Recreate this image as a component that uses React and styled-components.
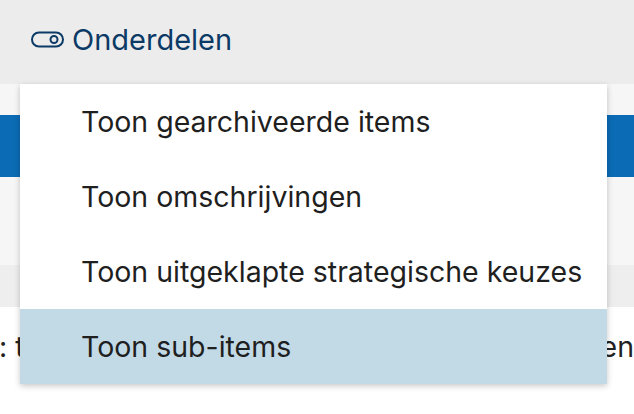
import React from 'react';
import styled, { createGlobalStyle } from 'styled-components';

const GlobalStyle = createGlobalStyle`
  html, body {
    margin: 0;
    padding: 0;
    background: #ffffff;
    font-family: Inter, "Noto Sans", sans-serif;
  }
`;

const Page = styled.div`
  position: relative;
  width: 634px;
  height: 414px;
  overflow: hidden;
`;

const Header = styled.div`
  height: 84px;
  background: #ececec;
  display: flex;
  align-items: center;
  padding: 0 0 5px 31px;
  box-sizing: border-box;
`;

const HeaderButton = styled.div`
  display: flex;
  align-items: center;
  gap: 7px;
  color: #0b3a66;
  font-size: 29px;
  font-weight: 400;
`;

const Band = styled.div`
  height: ${p => p.h}px;
  background: ${p => p.bg};
`;

const TextRow = styled.div`
  height: 107px;
  display: flex;
  align-items: center;
  justify-content: space-between;
  font-size: 28.5px;
  color: #222;
  white-space: nowrap;
  padding-bottom: 28px;
  box-sizing: border-box;
`;

const Clip = styled.span`
  margin-left: -1px;
`;

const Menu = styled.div`
  position: absolute;
  top: 84px;
  left: 20px;
  width: 587px;
  background: #ffffff;
  box-shadow: 0 2px 6px rgba(0, 0, 0, 0.22);
`;

const MenuItem = styled.div`
  height: 75px;
  display: flex;
  align-items: center;
  padding-left: 61px;
  font-size: 28.5px;
  color: #1f1f1f;
  background: ${p => (p.active ? '#c2dae6' : 'transparent')};
`;

const ToggleIcon = () => (
  <svg width="34" height="18" viewBox="0 0 34 18" fill="none">
    <rect x="1" y="1.5" width="31" height="14" rx="7" stroke="#0b3a66" strokeWidth="2" />
    <circle cx="23" cy="8.5" r="3.5" stroke="#0b3a66" strokeWidth="2" />
  </svg>
);

const items = [
  'Toon gearchiveerde items',
  'Toon omschrijvingen',
  'Toon uitgeklapte strategische keuzes',
  'Toon sub-items',
];

export default function App() {
  return (
    <Page>
      <GlobalStyle />
      <Header>
        <HeaderButton>
          <ToggleIcon />
          Onderdelen
        </HeaderButton>
      </Header>
      <Band h={31} bg="#f6f6f6" />
      <Band h={62} bg="#0b6bb4" />
      <Band h={88} bg="#f6f6f6" />
      <Band h={42} bg="#eeeeee" />
      <TextRow>
        <Clip>: t</Clip>
        <span>en</span>
      </TextRow>
      <Menu>
        {items.map((label, i) => (
          <MenuItem key={label} active={i === items.length - 1}>
            {label}
          </MenuItem>
        ))}
      </Menu>
    </Page>
  );
}
